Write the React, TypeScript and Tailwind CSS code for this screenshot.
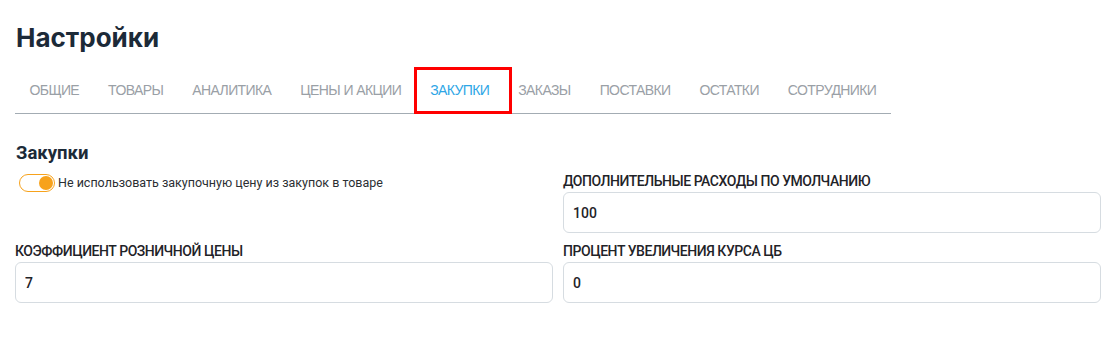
import { useState } from "react";

const tabs = [
  "Общие",
  "Товары",
  "Аналитика",
  "Цены и акции",
  "Закупки",
  "Заказы",
  "Поставки",
  "Остатки",
  "Сотрудники",
];

const Field = ({ label, value }: { label: string; value: string }) => (
  <div className="flex flex-col">
    <label className="h-[19px] text-[14px] font-medium uppercase leading-4 tracking-[-0.45px] text-[#1f2328]">
      {label}
    </label>
    <input
      defaultValue={value}
      className="h-[41px] rounded-md border border-[#d6dce1] bg-white px-[9px] text-[14px] font-medium text-[#1f2328] outline-none"
    />
  </div>
);

export default function App() {
  const [active] = useState("Закупки");
  const [skipPurchasePrice, setSkipPurchasePrice] = useState(true);

  return (
    <div className="min-h-[361px] bg-white pl-[15px] pr-[13px] pt-[22px] font-['Roboto',sans-serif]">
      <h1 className="pl-px font-['Inter',sans-serif] text-[26px] font-bold leading-[32px] text-[#1c2a38]">
        Настройки
      </h1>

      <nav className="mt-[14px] flex w-fit border-b border-[#a3acb3] font-['Liberation_Sans',sans-serif]">
        {tabs.map((tab) => {
          const isActive = tab === active;
          return (
            <div
              key={tab}
              className={
                "relative flex h-[45px] flex-none items-center whitespace-nowrap px-[14.5px] text-[14px] uppercase tracking-[-0.6px] " +
                (isActive ? "text-[#2ea6e6]" : "text-[#9aa0a6]")
              }
            >
              {tab}
              {isActive && (
                <span className="absolute -bottom-[1px] -left-[2px] -right-[8px] -top-[1px] border-[3px] border-[#ff0000]" />
              )}
            </div>
          );
        })}
      </nav>

      <div className="w-[1086px]">
        <h2 className="mt-[28px] pl-px text-[18.5px] font-bold leading-[22px] text-[#1c2a38]">
          Закупки
        </h2>

        <div className="mt-[9px] grid grid-cols-2 gap-x-[10px] gap-y-[10px]">
          <div className="flex items-start pl-[4px] pt-[1px]">
            <button
              onClick={() => setSkipPurchasePrice((v) => !v)}
              className="relative h-[18px] w-[36px] shrink-0 rounded-full border border-[#f7a21b] bg-white"
            >
              <span
                className={
                  "absolute top-[1px] h-[14px] w-[14px] rounded-full bg-[#f7a21b] " +
                  (skipPurchasePrice ? "right-[1px]" : "left-[1px]")
                }
              />
            </button>
            <span className="ml-[3px] text-[12.5px] leading-[17px] text-[#2b2f33]">
              Не использовать закупочную цену из закупок в товаре
            </span>
          </div>
          <Field label="Дополнительные расходы по умолчанию" value="100" />
          <Field label="Коэффициент розничной цены" value="7" />
          <Field label="Процент увеличения курса ЦБ" value="0" />
        </div>
      </div>
    </div>
  );
}
